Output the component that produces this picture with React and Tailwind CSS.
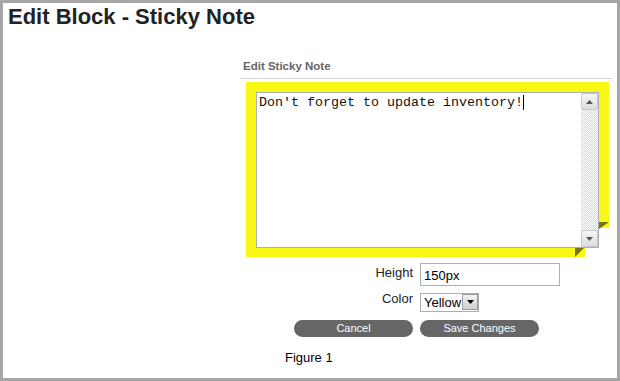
export default function App() {
  const font = { fontFamily: '"Liberation Sans", Arial, sans-serif' };
  return (
    <div
      className="w-[620px] h-[381px] border-[3px] border-[#a6a6a6] bg-white overflow-hidden"
      style={font}
    >
      <h1 className="pl-[5px] pt-[1px] text-[22px] leading-[26px] font-bold text-[#222]">
        Edit Block - Sticky Note
      </h1>
      <div className="ml-[237px] w-[373px] mt-[29px]">
        <div className="pl-[3px] pb-[5px] text-[11.5px] leading-[14px] font-bold text-[#666] border-b border-[#d4d4d4]">
          Edit Sticky Note
        </div>
        {/* sticky note */}
        <div className="relative ml-[6px] mt-[3px] w-[363px] h-[175px] bg-[#f8f814] pl-[10px] pt-[10px]">
          {/* folded corner cut-out */}
          <div className="absolute right-0 bottom-0 w-[24px] h-[29px] bg-white" />
          <svg className="absolute right-0 bottom-0" width="34" height="35" viewBox="0 0 34 35">
            <polygon points="24,0 34,0 24,7" fill="#76760a" />
            <polygon points="0,25 10,25 0,35" fill="#76760a" />
          </svg>
          <div className="relative z-10 w-[343px] h-[156px] border border-[#a9aeb8] bg-white flex">
            <div
              className="flex-1 pl-[2px] pt-[2px] text-[13.33px] leading-[16px] text-[#111]"
              style={{ fontFamily: '"Liberation Mono", "Courier New", monospace' }}
            >
              Don't forget to update inventory!
              <span className="inline-block align-top w-0 h-[15px] border-l border-black" />
            </div>
            <div className="w-[17px] flex flex-col bg-[image:repeating-conic-gradient(#d9d9d9_0%_25%,#ffffff_0%_50%)] bg-[length:2px_2px]">
              <div className="h-[17px] border border-[#c9c9c9] rounded-[2px] bg-gradient-to-b from-[#f6f6f6] to-[#dedede] flex items-center justify-center">
                <svg width="7" height="4" viewBox="0 0 7 4">
                  <polygon points="0,4 7,4 3.5,0" fill="#555" />
                </svg>
              </div>
              <div className="flex-1" />
              <div className="h-[17px] border border-[#c9c9c9] rounded-[2px] bg-gradient-to-b from-[#f6f6f6] to-[#dedede] flex items-center justify-center">
                <svg width="7" height="4" viewBox="0 0 7 4">
                  <polygon points="0,0 7,0 3.5,4" fill="#555" />
                </svg>
              </div>
            </div>
          </div>
        </div>
        {/* form */}
        <div className="mt-[6px] flex flex-col text-[13px] text-[#222]">
          <div className="flex gap-[7px] h-[23px]">
            <div className="w-[173px] text-right leading-[15px] mt-[2px]">Height</div>
            <div className="w-[140px] h-[23px] border border-[#a9aeb8] pl-[3px] pt-[2px] leading-[20px] text-black">
              150px
            </div>
          </div>
          <div className="flex gap-[7px] mt-[7px] h-[19px]">
            <div className="w-[173px] text-right leading-[15px] mt-[-2px]">Color</div>
            <div className="relative w-[59px] h-[19px] border border-[#a9aeb8] pl-[3px] leading-[17px] text-black">
              Yellow
              <div className="absolute right-0 top-0 w-[16px] h-[16px] border border-[#9a9a9a] bg-gradient-to-b from-[#f2f2f2] to-[#cfcfcf] flex items-center justify-center">
                <svg width="7" height="4" viewBox="0 0 7 4">
                  <polygon points="0,0 7,0 3.5,4" fill="#000" />
                </svg>
              </div>
            </div>
          </div>
          <div className="flex gap-[7px] mt-[8px]">
            <div className="w-[173px] flex justify-end">
              <div className="w-[119px] h-[17px] rounded-full bg-[#666] text-white text-[11px] leading-[17px] text-center">
                Cancel
              </div>
            </div>
            <div className="w-[119px] h-[17px] rounded-full bg-[#666] text-white text-[11px] leading-[17px] text-center">
              Save Changes
            </div>
          </div>
          <div className="mt-[13px] ml-[45px] leading-[15px] text-black">Figure 1</div>
        </div>
      </div>
    </div>
  );
}
